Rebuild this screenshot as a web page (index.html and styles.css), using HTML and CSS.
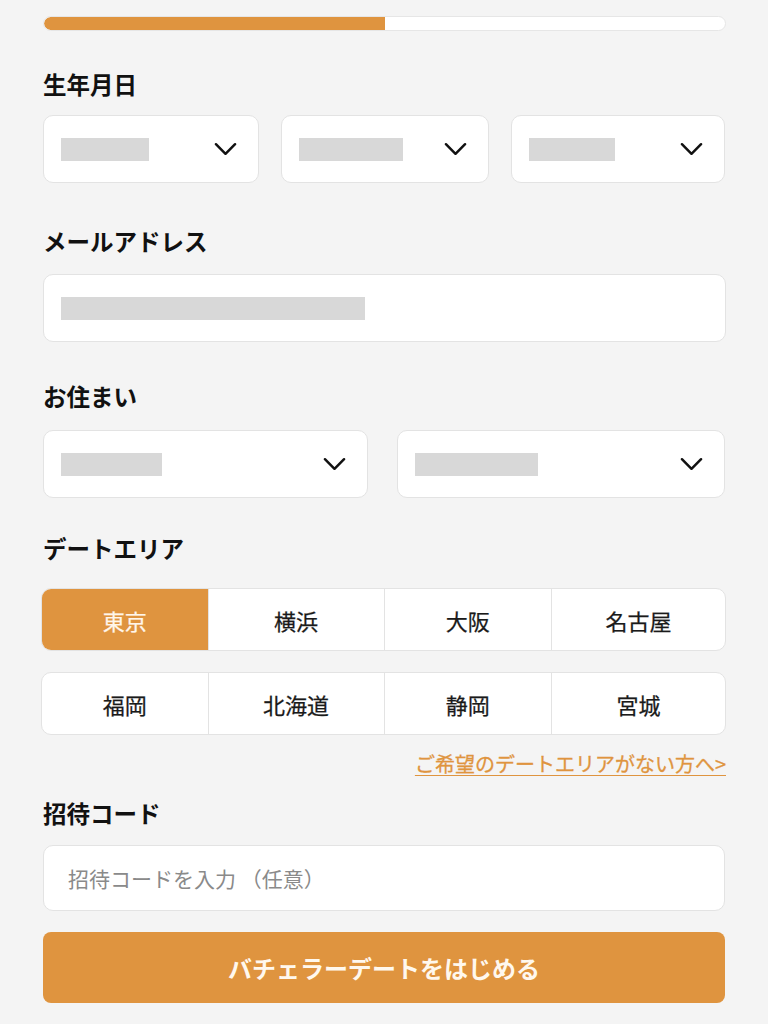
FILE: index.html
```html
<!DOCTYPE html>
<html lang="ja">
<head>
<meta charset="utf-8">
<link rel="stylesheet" href="styles.css">
</head>
<body>
<div class="page">
  <div class="progress"><div class="progress-fill"></div></div>

  <div class="label l-birth">生年月日</div>
  <div class="row three">
    <div class="select"><span class="ph" style="width:88px"></span><svg class="chev" viewBox="0 0 24 14"><path d="M2 2 L12 12 L22 2"/></svg></div>
    <div class="select"><span class="ph" style="width:104px"></span><svg class="chev" viewBox="0 0 24 14"><path d="M2 2 L12 12 L22 2"/></svg></div>
    <div class="select"><span class="ph" style="width:86px"></span><svg class="chev" viewBox="0 0 24 14"><path d="M2 2 L12 12 L22 2"/></svg></div>
  </div>

  <div class="label l-mail">メールアドレス</div>
  <div class="field mail"><span class="ph" style="width:304px"></span></div>

  <div class="label l-home">お住まい</div>
  <div class="row two">
    <div class="select"><span class="ph" style="width:101px"></span><svg class="chev" viewBox="0 0 24 14"><path d="M2 2 L12 12 L22 2"/></svg></div>
    <div class="select"><span class="ph" style="width:123px"></span><svg class="chev" viewBox="0 0 24 14"><path d="M2 2 L12 12 L22 2"/></svg></div>
  </div>

  <div class="label l-area">デートエリア</div>
  <div class="areas first">
    <div class="cell active">東京</div>
    <div class="cell">横浜</div>
    <div class="cell">大阪</div>
    <div class="cell">名古屋</div>
  </div>
  <div class="areas second">
    <div class="cell">福岡</div>
    <div class="cell">北海道</div>
    <div class="cell">静岡</div>
    <div class="cell">宮城</div>
  </div>
  <div class="link-row"><a class="link" href="#">ご希望のデートエリアがない方へ&gt;</a></div>

  <div class="label l-code">招待コード</div>
  <div class="field code"><span class="placeholder">招待コードを入力 （任意）</span></div>

  <div class="button">バチェラーデートをはじめる</div>
</div>
</body>
</html>
```

FILE: styles.css
```css
html, body {
  margin: 0;
  padding: 0;
  background: #f4f4f4;
}
body {
  font-family: "Noto Sans CJK JP", "Noto Sans", sans-serif;
  color: #151515;
}
.page {
  padding: 16px 43px 0 43px;
  display: flex;
  flex-direction: column;
}
.progress {
  height: 13px;
  border: 1px solid #e6e6e6;
  background: #ffffff;
  border-radius: 8px;
  overflow: hidden;
  margin-right: -1px;
}
.progress-fill {
  width: 341px;
  height: 100%;
  background: #df943f;
  border-radius: 8px 0 0 8px;
}
.label {
  font-size: 23.5px;
  font-weight: 700;
  line-height: 32px;
  color: #111;
}
.l-birth { margin-top: 37px; }
.l-mail { margin-top: 42px; }
.l-home { margin-top: 38px; }
.l-area { margin-top: 34px; }
.l-code { margin-top: 19px; }

.row {
  display: grid;
}
.three {
  margin-top: 15px;
  grid-template-columns: 215fr 208fr 213fr;
  column-gap: 22px;
}
.two {
  margin-top: 18px;
  grid-template-columns: 325fr 327fr;
  column-gap: 29px;
}
.select, .field {
  height: 66px;
  background: #ffffff;
  border: 1px solid #e3e3e3;
  border-radius: 10px;
  display: flex;
  align-items: center;
  justify-content: space-between;
  padding: 0 21px 0 17px;
}
.ph {
  display: block;
  height: 23px;
  background: #d8d8d8;
}
.chev {
  width: 23px;
  height: 14px;
  fill: none;
  stroke: #111;
  stroke-width: 2.6;
  stroke-linecap: round;
  stroke-linejoin: round;
}
.mail {
  margin-top: 17px;
  margin-right: -1px;
}
.areas {
  display: grid;
  grid-template-columns: 166fr 176fr 168fr 174fr;
  background: #ffffff;
  border: 1px solid #e3e3e3;
  border-radius: 10px;
  overflow: hidden;
  margin-left: -2px;
  margin-right: -1px;
}
.areas.first { margin-top: 24px; }
.areas.second { margin-top: 21px; }
.cell {
  height: 61px;
  display: flex;
  align-items: center;
  justify-content: center;
  font-size: 22px;
  font-weight: 400;
  -webkit-text-stroke: 0.25px #1a1a1a;
  color: #1a1a1a;
  border-left: 1px solid #e3e3e3;
}
.cell:first-child { border-left: none; }
.cell.active {
  background: #df943f;
  color: #fff6ea;
  -webkit-text-stroke: 0.25px #fff6ea;
}
.link-row {
  display: flex;
  justify-content: flex-end;
  margin-top: 15px;
  margin-right: -1px;
}
.link {
  font-size: 20px;
  line-height: 28px;
  font-weight: 400;
  -webkit-text-stroke: 0.3px #df943f;
  color: #df943f;
  text-decoration: underline;
  text-underline-offset: 3px;
  text-decoration-thickness: 1px;
}
.code {
  margin-top: 16px;
  height: 64px;
  padding-left: 24px;
}
.placeholder {
  font-size: 21px;
  color: #8a8a8a;
}
.button {
  margin-top: 21px;
  height: 71px;
  border-radius: 8px;
  background: #df943f;
  color: #fff8ee;
  font-size: 24px;
  font-weight: 700;
  display: flex;
  align-items: center;
  justify-content: center;
}
```
